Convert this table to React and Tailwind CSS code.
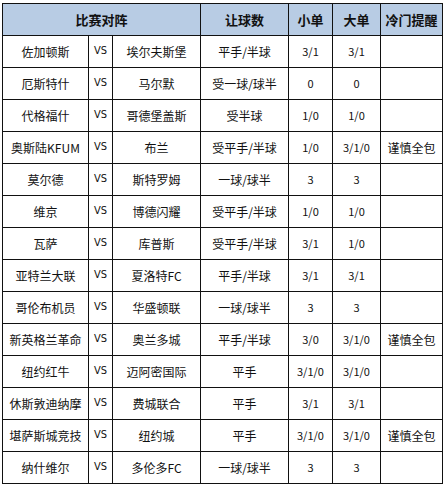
import React from 'react';

const rows = [
    ['佐加顿斯', '埃尔夫斯堡', '平手/半球', '3/1', '3/1', ''],
    ['厄斯特什', '马尔默', '受一球/球半', '0', '0', ''],
    ['代格福什', '哥德堡盖斯', '受半球', '1/0', '1/0', ''],
    ['奥斯陆KFUM', '布兰', '受平手/半球', '1/0', '3/1/0', '谨慎全包'],
    ['莫尔德', '斯特罗姆', '一球/球半', '3', '3', ''],
    ['维京', '博德闪耀', '受平手/半球', '1/0', '1/0', ''],
    ['瓦萨', '库普斯', '受平手/半球', '3/1', '1/0', ''],
    ['亚特兰大联', '夏洛特FC', '平手/半球', '3/1', '3/1', ''],
    ['哥伦布机员', '华盛顿联', '一球/球半', '3', '3', ''],
    ['新英格兰革命', '奥兰多城', '平手/半球', '3/0', '3/1/0', '谨慎全包'],
    ['纽约红牛', '迈阿密国际', '平手', '3/1/0', '3/1/0', ''],
    ['休斯敦迪纳摩', '费城联合', '平手', '3/1', '3/1', ''],
    ['堪萨斯城竞技', '纽约城', '平手', '3/1/0', '3/1/0', '谨慎全包'],
    ['纳什维尔', '多伦多FC', '一球/球半', '3', '3', ''],
];

const cell = 'border-r border-b border-[#111] text-center align-middle p-0 whitespace-nowrap overflow-hidden';

export default function App() {
    return (
        <div className="bg-white w-[445px] h-[488px] pt-[3px] pl-[2px]" style={{ fontFamily: '"Noto Sans CJK SC", "Noto Sans", sans-serif' }}>
            <table className="table-fixed border-separate border-spacing-0 border-l border-t border-[#111] text-[12px] text-[#111] w-[441px]">
                <colgroup>
                    <col className="w-[86px]" />
                    <col className="w-[24px]" />
                    <col className="w-[88px]" />
                    <col className="w-[88px]" />
                    <col className="w-[44px]" />
                    <col className="w-[48px]" />
                    <col className="w-[62px]" />
                </colgroup>
                <thead>
                    {/* Header */}
                    <tr className="h-[32px] bg-[#b8cce4] text-[13px] font-bold">
                        <th colSpan={3} className={cell}>比赛对阵</th>
                        <th className={cell}>让球数</th>
                        <th className={cell}>小单</th>
                        <th className={cell}>大单</th>
                        <th className={cell}>冷门提醒</th>
                    </tr>
                </thead>
                <tbody>
                    {rows.map((r, i) => (
                        <tr key={i} className="h-[32px]">
                            <td className={cell}>{r[0]}</td>
                            <td className={`${cell} text-[11px]`} style={{ fontFamily: '"Liberation Sans Narrow", "DejaVu Sans Condensed", sans-serif' }}>VS</td>
                            <td className={cell}>{r[1]}</td>
                            <td className={cell}>{r[2]}</td>
                            <td className={`${cell} text-[11px]`}>{r[3]}</td>
                            <td className={`${cell} text-[11px]`}>{r[4]}</td>
                            <td className={cell}>{r[5]}</td>
                        </tr>
                    ))}
                </tbody>
            </table>
        </div>
    );
}
